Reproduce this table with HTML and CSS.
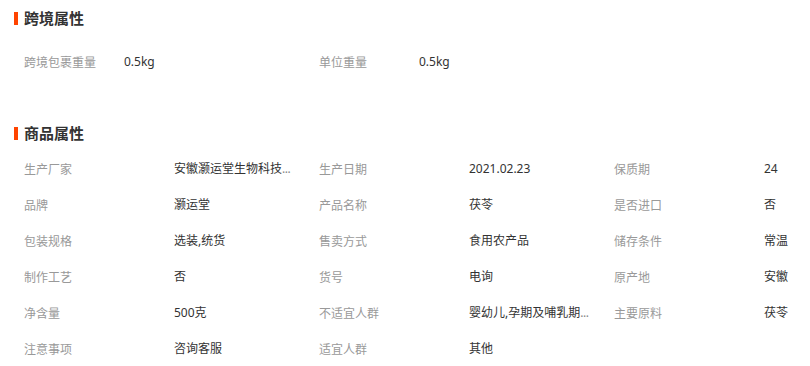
FILE: index.html
```html
<!DOCTYPE html>
<html lang="zh">
<head>
<meta charset="utf-8">
<link rel="stylesheet" href="styles.css">
</head>
<body>
<div class="page">
  <section class="block">
    <h2 class="title">跨境属性</h2>
    <div class="grid cross">
      <div class="cell"><span class="label">跨境包裹重量</span><span class="value">0.5kg</span></div>
      <div class="cell"><span class="label">单位重量</span><span class="value">0.5kg</span></div>
    </div>
  </section>
  <section class="block second">
    <h2 class="title">商品属性</h2>
    <div class="grid">
      <div class="cell"><span class="label">生产厂家</span><span class="value">安徽灏运堂生物科技<span class="dots">...</span></span></div>
      <div class="cell"><span class="label">生产日期</span><span class="value">2021.02.23</span></div>
      <div class="cell"><span class="label">保质期</span><span class="value">24</span></div>
      <div class="cell"><span class="label">品牌</span><span class="value">灏运堂</span></div>
      <div class="cell"><span class="label">产品名称</span><span class="value">茯苓</span></div>
      <div class="cell"><span class="label">是否进口</span><span class="value">否</span></div>
      <div class="cell"><span class="label">包装规格</span><span class="value">选装,统货</span></div>
      <div class="cell"><span class="label">售卖方式</span><span class="value">食用农产品</span></div>
      <div class="cell"><span class="label">储存条件</span><span class="value">常温</span></div>
      <div class="cell"><span class="label">制作工艺</span><span class="value">否</span></div>
      <div class="cell"><span class="label">货号</span><span class="value">电询</span></div>
      <div class="cell"><span class="label">原产地</span><span class="value">安徽</span></div>
      <div class="cell"><span class="label">净含量</span><span class="value">500克</span></div>
      <div class="cell"><span class="label">不适宜人群</span><span class="value">婴幼儿,孕期及哺乳期<span class="dots">...</span></span></div>
      <div class="cell"><span class="label">主要原料</span><span class="value">茯苓</span></div>
      <div class="cell"><span class="label">注意事项</span><span class="value">咨询客服</span></div>
      <div class="cell"><span class="label">适宜人群</span><span class="value">其他</span></div>
    </div>
  </section>
</div>
</body>
</html>
```

FILE: styles.css
```css
html, body {
  margin: 0;
  padding: 0;
  background: #fff;
  overflow: hidden;
}
.page {
  width: 810px;
  font-family: "Microsoft YaHei", "Noto Sans CJK SC", "Noto Sans", sans-serif;
  font-size: 12px;
  color: #333;
}
.block.second {
  margin-top: 35px;
}
.title {
  margin: 0 0 0 14px;
  height: 36px;
  line-height: 36px;
  padding-left: 10px;
  font-size: 15px;
  font-weight: bold;
  color: #333;
  position: relative;
}
.title::before {
  content: "";
  position: absolute;
  left: 0;
  top: 12px;
  width: 4px;
  height: 13px;
  background: #ff4400;
}
.grid {
  display: grid;
  grid-template-columns: 295px 295px minmax(0, 1fr);
  padding-left: 24px;
}
.cross {
  margin-top: 8px;
}
.cell {
  display: flex;
  min-width: 0;
  height: 36px;
  line-height: 36px;
}
.label {
  width: 150px;
  flex: none;
  color: #999;
}
.cross .label {
  width: 100px;
}
.value {
  white-space: nowrap;
  font-family: "Noto Sans", "Noto Sans CJK SC", sans-serif;
  color: #333;
}
.dots {
  color: #888;
  letter-spacing: -0.5px;
}
```
